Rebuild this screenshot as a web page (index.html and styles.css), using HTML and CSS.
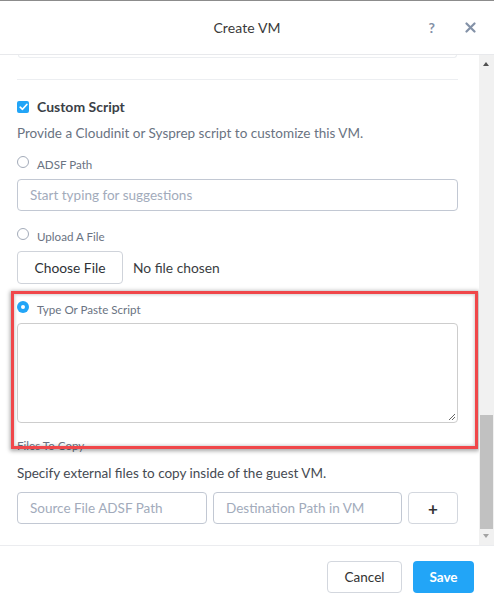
FILE: index.html
```html
<!DOCTYPE html>
<html>
<head>
<meta charset="utf-8">
<link rel="stylesheet" href="styles.css">
</head>
<body>
<div class="modal">
  <header class="hdr">
    <div class="title">Create VM</div>
    <div class="hdr-icons">
      <span class="help">?</span>
      <svg class="close" width="11" height="11" viewBox="0 0 11 11"><path d="M1.5 1.5L9.5 9.5M9.5 1.5L1.5 9.5" stroke="#8391a7" stroke-width="2.2" stroke-linecap="round"/></svg>
    </div>
  </header>
  <div class="body">
    <div class="scroll">
      <div class="card-end"></div>
      <div class="rule"></div>
      <div class="check-row">
        <span class="checkbox"><svg width="9" height="8" viewBox="0 0 9 8"><path d="M1.2 4.2L3.5 6.3L7.8 1.5" fill="none" stroke="#fff" stroke-width="1.7" stroke-linecap="round" stroke-linejoin="round"/></svg></span>
        <span class="check-label">Custom Script</span>
      </div>
      <p class="desc">Provide a Cloudinit or Sysprep script to customize this VM.</p>
      <div class="radio-row r1"><span class="radio"></span><span class="rlabel">ADSF Path</span></div>
      <div class="input wide"><span class="ph">Start typing for suggestions</span></div>
      <div class="radio-row r2"><span class="radio"></span><span class="rlabel">Upload A File</span></div>
      <div class="file-row"><span class="btn-file">Choose File</span><span class="nofile">No file chosen</span></div>
      <div class="radio-row r3"><span class="radio on"></span><span class="rlabel">Type Or Paste Script</span></div>
      <div class="textarea"><svg class="grip" width="8" height="8" viewBox="0 0 8 8"><path d="M7 1L1 7M7 4L4 7" stroke="#555" stroke-width="0.9"/></svg></div>
      <div class="small-label">Files To Copy</div>
      <p class="desc d2">Specify external files to copy inside of the guest VM.</p>
      <div class="copy-row">
        <div class="input src"><span class="ph">Source File ADSF Path</span></div>
        <div class="input dst"><span class="ph">Destination Path in VM</span></div>
        <div class="btn-plus">+</div>
      </div>
      <div class="highlight"></div>
    </div>
    <div class="sbar">
      <div class="arrow up"></div>
      <div class="track"><div class="thumb"></div></div>
      <div class="arrow down"></div>
    </div>
  </div>
  <footer class="ftr">
    <span class="btn cancel">Cancel</span>
    <span class="btn save">Save</span>
  </footer>
</div>
</body>
</html>
```
FILE: styles.css
```css
* { box-sizing: border-box; }
html, body { margin: 0; padding: 0; background: #fff; }
body { font-family: Lato, "Open Sans", sans-serif; color: #333; width: 494px; height: 607px; overflow: hidden; }
.modal { width: 494px; height: 607px; display: flex; flex-direction: column; border-top: 1px solid #8c8c8c; }
.hdr { height: 54px; border-bottom: 1px solid #e8e9ec; position: relative; display: flex; align-items: center; justify-content: center; }
.title { font-size: 14px; color: #3a3a3a; letter-spacing: 0.1px; }
.hdr-icons { position: absolute; right: 18px; top: 0; height: 100%; display: flex; align-items: center; gap: 30px; }
.help { font-weight: 700; font-size: 14px; color: #8391a7; }
.close { display: block; }
.body { height: 491px; display: flex; border-bottom: 1px solid #ebecef; }
.scroll { width: 479px; position: relative; overflow: hidden; padding: 0 21px 0 17px; }
.card-end { height: 3px; margin: 0 1px; border: 1px solid #eceef1; border-top: none; border-radius: 0 0 4px 4px; }
.rule { margin-top: 21px; height: 1px; background: #eceef1; }
.check-row { margin-top: 20px; height: 13px; display: flex; align-items: center; }
.checkbox { width: 12px; height: 12px; background: #22a5f7; border-radius: 2px; display: flex; align-items: center; justify-content: center; }
.check-label { margin-left: 8px; font-size: 14px; font-weight: 700; color: #3b3f47; }
.desc { margin: 12px 0 0; font-size: 13.5px; color: #6a7382; line-height: 16px; }
.radio-row { display: flex; align-items: center; height: 14px; }
.r1 { margin-top: 16px; }
.r2 { margin-top: 18px; }
.r3 { margin-top: 18px; }
.radio { width: 12px; height: 12px; border: 1px solid #a3abb9; border-radius: 50%; position: relative; top: -2px; }
.radio.on { border: none; background: #22a5f7; }
.radio.on::after { content: ""; position: absolute; left: 4px; top: 4px; width: 4px; height: 4px; border-radius: 50%; background: #fff; }
.rlabel { margin-left: 8px; font-size: 11.6px; color: #6a7382; }
.input { height: 32px; border: 1px solid #c2c8d3; border-radius: 4px; display: flex; align-items: center; padding-left: 12px; }
.input.wide { margin-top: 8px; }
.ph { font-size: 13.5px; color: #a2abbb; white-space: nowrap; }
.file-row { margin-top: 8px; display: flex; align-items: center; }
.btn-file { width: 106px; height: 33px; border: 1px solid #cfd3da; border-radius: 4px; display: flex; align-items: center; justify-content: center; font-size: 13.8px; color: #2f3237; }
.nofile { margin-left: 10px; font-size: 13.8px; color: #3a3d42; }
.textarea { margin-top: 7px; height: 100px; border: 1px solid #cdcdcd; border-radius: 4px; position: relative; }
.grip { position: absolute; right: 1px; bottom: 1px; }
.small-label { margin-top: 17px; font-size: 11.6px; color: #6a7382; height: 12px; line-height: 12px; }
.d2 { margin-top: 13px; color: #454a52; }
.copy-row { margin-top: 11px; display: flex; gap: 6px; }
.src { width: 190px; }
.dst { width: 189px; }
.btn-plus { width: 50px; height: 32px; border: 1px solid #d3d7de; border-radius: 4px; display: flex; align-items: center; justify-content: center; font-size: 17px; font-weight: 700; color: #333; }
.highlight { position: absolute; left: 11px; top: 236px; width: 467px; height: 158px; border: 3px solid #f0474a; box-shadow: 0 1px 4px 1px rgba(0,0,0,0.35), inset 0 0 3px 1px rgba(0,0,0,0.18); pointer-events: none; }
.sbar { width: 15px; background: #f1f1f1; display: flex; flex-direction: column; }
.arrow { height: 17px; position: relative; }
.arrow::after { content: ""; position: absolute; left: 4px; border-left: 3.5px solid transparent; border-right: 3.5px solid transparent; }
.arrow.up::after { top: 7px; border-bottom: 4px solid #505050; }
.arrow.down::after { top: 6px; border-top: 4px solid #a3a3a3; }
.track { flex: 1; position: relative; }
.thumb { position: absolute; left: 1px; right: 1px; top: 343px; height: 114px; background: #c1c1c1; }
.ftr { flex: 1; display: flex; justify-content: flex-end; align-items: flex-start; padding: 15px 20px 0 0; gap: 11px; }
.btn { height: 32px; border-radius: 4px; display: flex; align-items: center; justify-content: center; font-size: 13.5px; }
.cancel { width: 75px; border: 1px solid #d3d7de; color: #333; }
.save { width: 61px; background: #22a5f7; color: #fff; font-weight: 700; }
```
